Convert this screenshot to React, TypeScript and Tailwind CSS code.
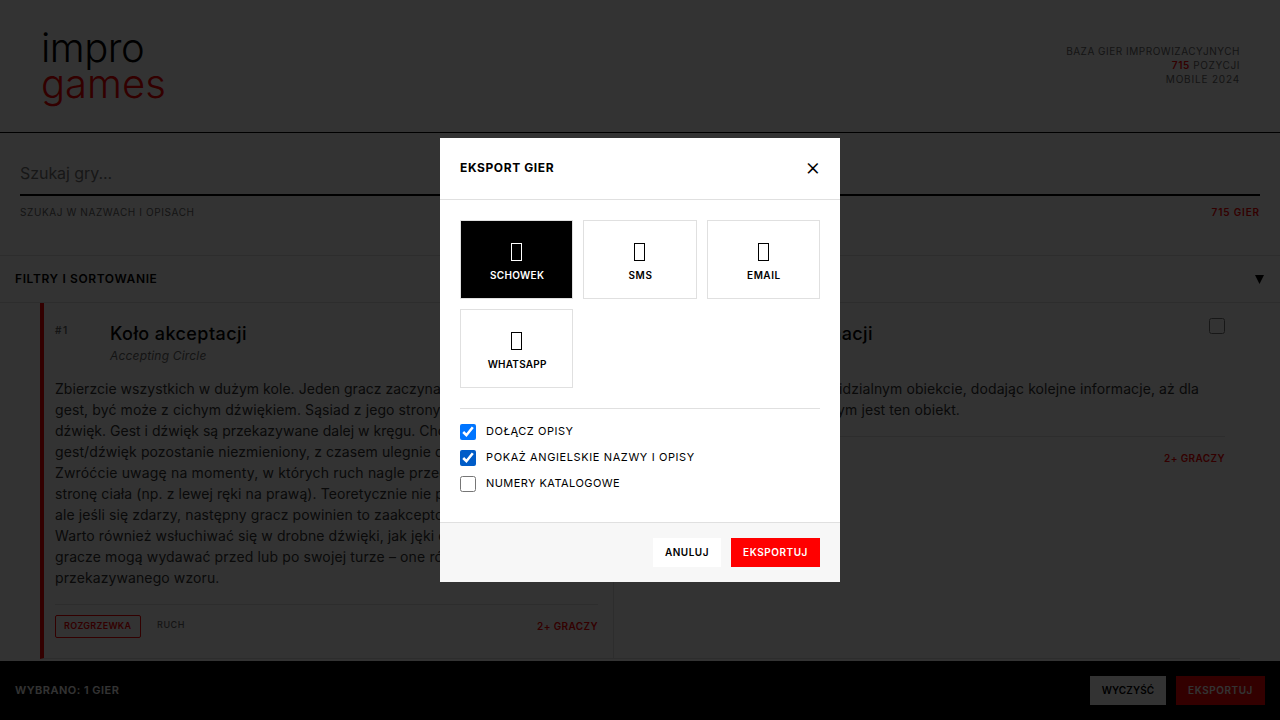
import React from "react";

const DESCRIPTION = [
  { text: "Zbierzcie wszystkich w dużym kole. Jeden gracz zaczyna prosty", tracking: "tracking-[0.04px]" },
  { text: "gest, być może z cichym dźwiękiem. Sąsiad z jego strony stara się", tracking: "tracking-[0.1px]" },
  { text: "dźwięk. Gest i dźwięk są przekazywane dalej w kręgu. Choć", tracking: "tracking-[0.01px]" },
  { text: "gest/dźwięk pozostanie niezmieniony, z czasem ulegnie dużej", tracking: "tracking-[0.1px]" },
  { text: "Zwróćcie uwagę na momenty, w których ruch nagle przechodzi", tracking: "tracking-[0.166px]" },
  { text: "stronę ciała (np. z lewej ręki na prawą). Teoretycznie nie powinno", tracking: "tracking-[0.083px]" },
  { text: "ale jeśli się zdarzy, następny gracz powinien to zaakceptować.", tracking: "tracking-[0.1px]" },
  { text: "Warto również wsłuchiwać się w drobne dźwięki, jak jęki czy", tracking: "tracking-[0.1px]" },
  { text: "gracze mogą wydawać przed lub po swojej turze – one również", tracking: "tracking-[0.135px]" },
  { text: "przekazywanego wzoru.", tracking: "tracking-[0.1px]" },
];

const CHANNELS = [
  { label: "SCHOWEK", tracking: "tracking-[0.3px]", active: true },
  { label: "SMS", tracking: "tracking-[0.6px]", active: false },
  { label: "EMAIL", tracking: "tracking-[0.5px]", active: false },
  { label: "WHATSAPP", tracking: "tracking-[0.22px]", active: false },
];

const OPTIONS = [
  { label: "DOŁĄCZ OPISY", tracking: "tracking-[0.54px]", checked: true, accent: "" },
  { label: "POKAŻ ANGIELSKIE NAZWY I OPISY", tracking: "tracking-[0.61px]", checked: true, accent: "accent-[#005cc8]" },
  { label: "NUMERY KATALOGOWE", tracking: "tracking-[0.44px]", checked: false, accent: "" },
];

function Header() {
  return (
    <header className="flex h-[133px] items-center justify-between border-b border-black px-10">
      <h1 className="-mt-px pl-px text-[40px] leading-9 font-light">
        <span className="block tracking-[-0.5px]">impro</span>
        <span className="block text-[#ff0000]">games</span>
      </h1>
      <div className="-mt-0.5 text-right text-[10px] leading-[14px] text-[#666]">
        <p className="tracking-[0.51px]">BAZA GIER IMPROWIZACYJNYCH</p>
        <p className="tracking-[0.6px]">
          <span className="font-semibold text-[#ff0000]">715</span> POZYCJI
        </p>
        <p className="tracking-[0.82px]">MOBILE 2024</p>
      </div>
    </header>
  );
}

function Search() {
  return (
    <section className="h-[123px] border-b border-[#e0e0e0] p-5">
      <div className="flex h-[43px] items-center border-b-2 border-black pb-0.5 text-base tracking-[-0.06px] text-[#757575]">
        Szukaj gry...
      </div>
      <div className="mt-[9px] flex justify-between text-[10px] leading-[14px]">
        <span className="tracking-[0.6px] text-[#666]">SZUKAJ W NAZWACH I OPISACH</span>
        <span className="font-semibold tracking-[0.85px] text-[#ff0000]">715 GIER</span>
      </div>
    </section>
  );
}

function Players() {
  return <span className="text-[10px] leading-[14px] font-semibold tracking-[0.4px] text-[#ff0000]">2+ GRACZY</span>;
}

function Cards() {
  return (
    <main className="flex h-[356px] px-10">
      <article className="w-[574px] overflow-hidden border-r border-b border-l-4 border-r-[#e0e0e0] border-b-[#e0e0e0] border-l-[#ff0000] pt-[15px] pr-[15px] pl-[11px]">
        <div className="flex h-[60px]">
          <span className="w-[55px] pt-[5px] text-[10px] leading-[14px] font-semibold tracking-[1.5px] text-[#666]">#1</span>
          <div className="pt-[5px]">
            <h2 className="text-lg leading-[22px] font-medium tracking-[0.42px]">Koło akceptacji</h2>
            <p className="mt-[3px] text-xs leading-[15px] tracking-[0.18px] text-[#666] italic">Accepting Circle</p>
          </div>
        </div>
        <div className="text-sm leading-[21px] whitespace-nowrap text-[#333]">
          {DESCRIPTION.map((line) => (
            <p key={line.text} className={line.tracking}>{line.text}</p>
          ))}
        </div>
        <div className="mt-4 flex items-start border-t border-[#e0e0e0] pt-2.5">
          <span className="flex h-[23px] w-[86px] items-center rounded-[2px] border border-[#ff0000] pb-px pl-2 text-[9px] font-semibold tracking-[0.3px] text-[#ff0000]">
            ROZGRZEWKA
          </span>
          <span className="ml-4 pt-[3px] text-[9px] leading-[14px] font-medium tracking-[0.55px] text-[#666]">RUCH</span>
          <span className="ml-auto flex pt-1"><Players /></span>
        </div>
      </article>
      <article className="flex-1 border-b border-[#e0e0e0] p-[15px]">
        <div className="flex h-[60px] justify-between">
          <h2 className="w-[244px] pt-[5px] text-right text-lg leading-[22px] font-medium tracking-[0.42px]">Dodawanie informacji</h2>
          <input type="checkbox" className="size-4" />
        </div>
        <div className="text-sm leading-[21px] whitespace-nowrap text-[#333]">
          <p className="w-[570px] text-right tracking-[0.094px]">Gracze opowiadają o niewidzialnym obiekcie, dodając kolejne informacje, aż dla</p>
          <p className="w-[331px] text-right tracking-[0.094px]">wszystkich stanie się jasne, czym jest ten obiekt.</p>
        </div>
        <div className="mt-4 flex justify-end border-t border-[#e0e0e0] pt-3.5">
          <Players />
        </div>
      </article>
    </main>
  );
}

function SelectionBar() {
  return (
    <div className="fixed inset-x-0 bottom-0 flex h-[59px] items-center justify-between bg-black px-[15px] text-white">
      <span className="text-[11px] font-semibold tracking-[0.48px]">WYBRANO: 1 GIER</span>
      <div className="flex gap-2.5 text-[10px] font-semibold">
        <button className="h-[29px] w-[76px] bg-white tracking-[0.1px] text-black">WYCZYŚĆ</button>
        <button className="h-[29px] w-[89px] bg-[#ff0000] tracking-[0.55px]">EKSPORTUJ</button>
      </div>
    </div>
  );
}

function ExportDialog() {
  return (
    <div className="fixed inset-0 flex items-center justify-center bg-black/80">
      <div role="dialog" className="h-[444px] w-[400px] bg-white">
        <div className="flex h-[62px] items-center justify-between border-b border-[#e0e0e0] px-5">
          <h3 className="pb-0.5 text-xs font-bold tracking-[0.6px]">EKSPORT GIER</h3>
          <button className="w-[15px] pb-[3px] text-center text-[24px] leading-none font-light">×</button>
        </div>
        <div className="h-[322px] p-5">
          <div className="grid grid-cols-3 gap-2.5">
            {CHANNELS.map((c) => (
              <button
                key={c.label}
                className={`flex h-[79px] flex-col items-center border border-[#e0e0e0] pt-[22px] ${c.active ? "bg-black text-white" : "bg-white text-black"}`}
              >
                <span className="h-[18px] w-[11px] border border-current" />
                <span className={`mt-[7px] pl-px text-[10px] leading-[14px] font-semibold ${c.tracking}`}>{c.label}</span>
              </button>
            ))}
          </div>
          <div className="mt-5 flex flex-col gap-2.5 border-t border-[#e0e0e0] pt-[15px]">
            {OPTIONS.map((o) => (
              <label key={o.label} className="flex h-4 gap-2.5">
                <input type="checkbox" defaultChecked={o.checked} className={`size-4 ${o.accent}`} />
                <span className={`text-[11px] leading-[15px] ${o.tracking}`}>{o.label}</span>
              </label>
            ))}
          </div>
        </div>
        <div className="flex h-[60px] items-center justify-end gap-2.5 border-t border-[#e0e0e0] bg-[#f7f7f7] px-5 text-[10px] font-semibold">
          <button className="h-[29px] w-[68px] bg-white tracking-[0.5px]">ANULUJ</button>
          <button className="h-[29px] w-[89px] bg-[#ff0000] tracking-[0.55px] text-white">EKSPORTUJ</button>
        </div>
      </div>
    </div>
  );
}

export default function App() {
  return (
    <div className="h-screen overflow-hidden bg-white font-['Inter',sans-serif] text-black">
      <Header />
      <Search />
      <div className="flex h-[47px] items-center justify-between border-b border-[#e0e0e0] px-[15px]">
        <span className="text-xs font-semibold tracking-[0.62px]">FILTRY I SORTOWANIE</span>
        <svg className="mr-px h-[9px] w-[9px]" viewBox="0 0 9 9" fill="currentColor">
          <path d="M0 0h9L4.5 9z" />
        </svg>
      </div>
      <Cards />
      <SelectionBar />
      <ExportDialog />
    </div>
  );
}
